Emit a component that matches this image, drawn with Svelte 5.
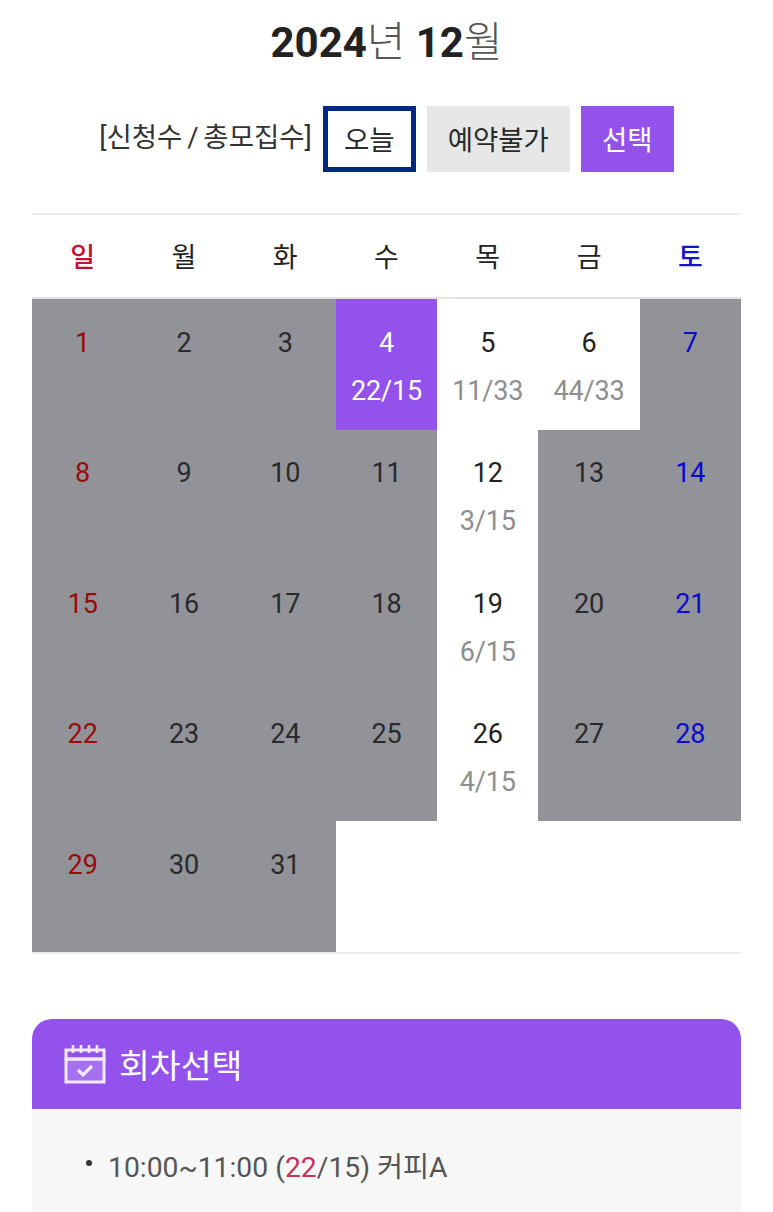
<script>
  const days = ['일', '월', '화', '수', '목', '금', '토'];
  const open = { 4: '22/15', 5: '11/33', 6: '44/33', 12: '3/15', 19: '6/15', 26: '4/15' };
  const dates = [...Array(31)].map((_, i) => i + 1);
  const blanks = [...Array(4)];
</script>

<main class="page">
  <h1 class="title"><b>2024</b>년 <b>12</b>월</h1>

  <div class="legend">
    <span class="legend-label">[신청수 / 총모집수]</span>
    <span class="chip today">오늘</span>
    <span class="chip blocked">예약불가</span>
    <span class="chip chosen">선택</span>
  </div>

  <section class="calendar">
    <div class="weekdays">
      {#each days as d, i}
        <div class:sun={i === 0} class:sat={i === 6}>{d}</div>
      {/each}
    </div>
    <div class="grid">
      {#each dates as n}
        <div
          class="cell"
          class:closed={!open[n]}
          class:selected={n === 4}
          class:sun={n % 7 === 1}
          class:sat={n % 7 === 0}
        >
          <span class="num">{n}</span>
          {#if open[n]}<span class="count">{open[n]}</span>{/if}
        </div>
      {/each}
      {#each blanks as _}<div class="cell"></div>{/each}
    </div>
  </section>

  <section class="panel">
    <header class="panel-head">
      <svg class="icon" viewBox="0 0 42 40" fill="none" stroke="#f1e8fd" stroke-width="3" aria-hidden="true">
        <rect x="2" y="15" width="38" height="23" fill="#a671f0" />
        <path d="M2 6H40V15H2Z" stroke-width="3" />
        <path d="M9 1v8M17 1v8M25 1v8M33 1v8" stroke-width="2.6" />
        <path d="M14 26l5 5 9-9" stroke-width="3.2" />
      </svg>
      <span>회차선택</span>
    </header>
    <div class="panel-body">
      <div class="session">
        <i class="dot"></i>
        <span>10:00~11:00 (<em>22</em>/15) 커피A</span>
      </div>
    </div>
  </section>
</main>

<style>
  :global(body) {
    margin: 0;
    background: #fff;
  }
  .page {
    height: 1212px;
    overflow: hidden;
    padding: 0 32px;
    box-sizing: border-box;
    font-family: Roboto, "Noto Sans CJK KR", sans-serif;
    color: #222;
  }
  .title {
    margin: 0;
    padding-top: 14px;
    height: 106px;
    box-sizing: border-box;
    text-align: center;
    font-size: 42px;
    line-height: 58px;
    font-weight: 300;
    color: #555;
  }
  .title b {
    font-weight: 700;
    color: #222;
  }
  .legend {
    display: flex;
    justify-content: center;
    align-items: center;
    gap: 11px;
    height: 66px;
    font-size: 27.5px;
    color: #2a2a2a;
  }
  .legend-label {
    color: #333;
    margin-top: -9px;
    word-spacing: -2px;
  }
  .chip {
    height: 66px;
    box-sizing: border-box;
    display: flex;
    align-items: center;
    justify-content: center;
    padding-bottom: 2px;
  }
  .today {
    width: 93px;
    border: 5px solid #002a82;
  }
  .blocked {
    width: 143px;
    background: #e7e7e7;
  }
  .chosen {
    width: 93px;
    background: #9452ec;
    color: #fff;
  }
  .calendar {
    margin-top: 41px;
    border-top: 2px solid #eee;
    border-bottom: 2px solid #eee;
  }
  .weekdays {
    display: grid;
    grid-template-columns: repeat(7, 1fr);
    height: 82px;
    border-bottom: 2px solid #e4e4e4;
    font-size: 27px;
    text-align: center;
    line-height: 86px;
  }
  .weekdays .sun {
    color: #c8102e;
    font-weight: 500;
  }
  .weekdays .sat {
    color: #1414c8;
    font-weight: 500;
  }
  .grid {
    display: grid;
    grid-template-columns: repeat(7, 1fr);
    grid-auto-rows: 130.6px;
  }
  .cell {
    display: flex;
    flex-direction: column;
    align-items: center;
    padding-top: 19.6px;
    box-sizing: border-box;
    font-size: 27px;
    line-height: 48px;
    letter-spacing: -0.005em;
  }
  .closed {
    background: #929398;
    color: #2a2a2c;
  }
  .closed.sun {
    color: #9c0a0a;
  }
  .closed.sat {
    color: #0a0ad2;
  }
  .count {
    color: #8e8e90;
  }
  .selected {
    background: #9452ec;
    color: #fff;
  }
  .selected .count {
    color: #fff;
  }
  .panel {
    margin-top: 65px;
  }
  .panel-head {
    height: 90px;
    background: #9452ec;
    border-radius: 20px 20px 0 0;
    display: flex;
    align-items: center;
    gap: 13px;
    padding-left: 32px;
    color: #fff;
    font-size: 33.5px;
  }
  .icon {
    width: 42px;
    height: 40px;
    flex: none;
  }
  .panel-body {
    background: #f7f7f8;
    height: 120px;
    padding: 36px 0 0 54px;
    box-sizing: border-box;
  }
  .session {
    display: flex;
    align-items: flex-start;
    gap: 16px;
    font-size: 28.3px;
    line-height: 46px;
    color: #555;
  }
  .dot {
    width: 6px;
    height: 6px;
    margin-top: 15px;
    border-radius: 50%;
    background: #333;
    flex: none;
  }
  .session em {
    font-style: normal;
    color: #c8305a;
  }
</style>
